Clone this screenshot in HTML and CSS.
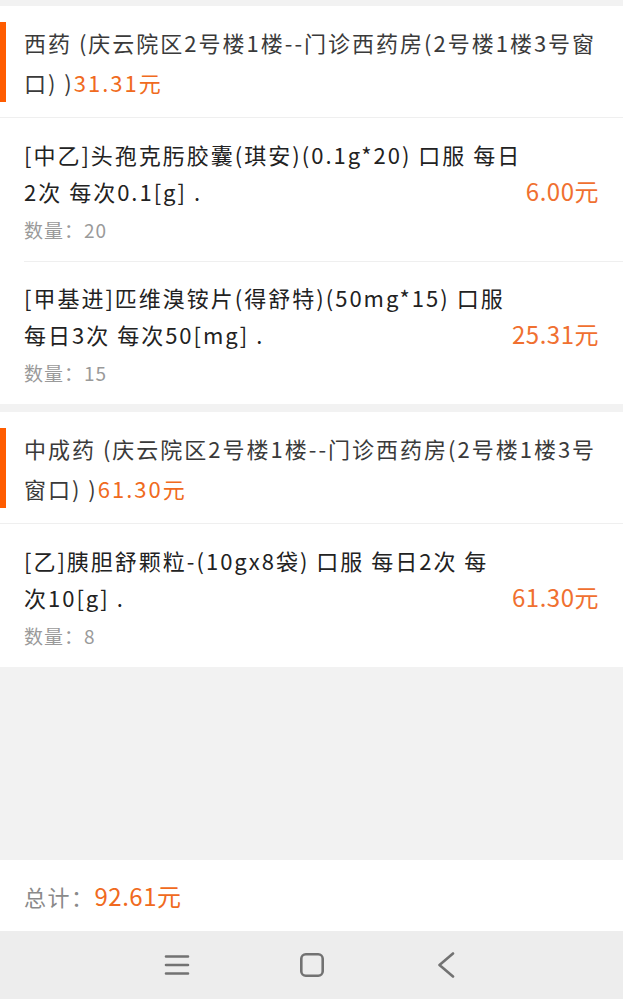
FILE: index.html
```html
<!DOCTYPE html>
<html lang="zh-CN">
<head>
<meta charset="utf-8">
<meta name="viewport" content="width=device-width, initial-scale=1">
<title>处方明细</title>
<link rel="stylesheet" href="styles.css">
</head>
<body>
<div class="page">
  <main class="content">
    <section class="card">
      <div class="group-head">
        <div class="group-title">西药 (庆云院区2号楼1楼--门诊西药房(2号楼1楼3号窗口) )<span class="amount">31.31元</span></div>
      </div>
      <div class="item">
        <div class="item-info">
          <div class="item-name">[中乙]头孢克肟胶囊(琪安)(0.1g*20) 口服 每日2次 每次0.1[g] .</div>
          <div class="item-qty">数量：20</div>
        </div>
        <div class="item-price">6.00元</div>
      </div>
      <div class="item">
        <div class="item-info">
          <div class="item-name">[甲基进]匹维溴铵片(得舒特)(50mg*15) 口服 每日3次 每次50[mg] .</div>
          <div class="item-qty">数量：15</div>
        </div>
        <div class="item-price">25.31元</div>
      </div>
    </section>
    <section class="card">
      <div class="group-head">
        <div class="group-title">中成药 (庆云院区2号楼1楼--门诊西药房(2号楼1楼3号窗口) )<span class="amount">61.30元</span></div>
      </div>
      <div class="item">
        <div class="item-info">
          <div class="item-name">[乙]胰胆舒颗粒-(10gx8袋) 口服 每日2次 每次10[g] .</div>
          <div class="item-qty">数量：8</div>
        </div>
        <div class="item-price">61.30元</div>
      </div>
    </section>
  </main>
  <div class="spacer"></div>
  <footer class="total-bar">
    <span class="total-label">总计：</span><span class="total-value">92.61元</span>
  </footer>
  <nav class="sys-nav">
    <svg class="nav-icon" width="26" height="26" viewBox="0 0 26 26" aria-hidden="true">
      <path d="M2 4.5H24M2 13H24M2 21.5H24" stroke="#727272" stroke-width="2.6" stroke-linecap="round" fill="none"/>
    </svg>
    <svg class="nav-icon" width="26" height="26" viewBox="0 0 26 26" aria-hidden="true">
      <rect x="2.3" y="2.3" width="21.4" height="21.4" rx="4.5" stroke="#727272" stroke-width="2.6" fill="none"/>
    </svg>
    <svg class="nav-icon" width="26" height="26" viewBox="0 0 26 26" aria-hidden="true">
      <path d="M19 1.5L5.5 13L19 24.5" stroke="#727272" stroke-width="2.6" stroke-linecap="round" stroke-linejoin="round" fill="none"/>
    </svg>
  </nav>
</div>
</body>
</html>
```
FILE: styles.css
```css
* {
  box-sizing: border-box;
}

html, body {
  margin: 0;
  padding: 0;
}

body {
  background: #f2f2f2;
  font-family: "Noto Sans CJK SC", "Noto Sans", sans-serif;
  color: #333333;
}

.page {
  display: flex;
  flex-direction: column;
  min-height: 100vh;
  height: 999px;
}

.content {
  padding-top: 6px;
  display: flex;
  flex-direction: column;
  gap: 8px;
}

.card {
  background: #ffffff;
}

.group-head {
  padding: 16px 18px 15px 0;
  border-bottom: 1px solid #efefef;
}

.group-title {
  border-left: 6px solid #ff5c00;
  padding-left: 18px;
  font-size: 22px;
  letter-spacing: 2px;
  line-height: 40px;
  color: #3a3a3a;
}

.amount {
  color: #f06a20;
}

.item {
  display: flex;
  align-items: center;
  padding: 18px 24px 16px 24px;
  position: relative;
}

.item + .item::before {
  content: "";
  position: absolute;
  left: 24px;
  right: 0;
  top: 0;
  border-top: 1px solid #efefef;
}

.item-info {
  flex: 1;
  min-width: 0;
}

.item-name {
  font-size: 22px;
  letter-spacing: 2px;
  line-height: 37px;
  color: #222222;
}

.item-qty {
  margin-top: 5px;
  font-size: 19px;
  letter-spacing: 1px;
  line-height: 30px;
  color: #9a9a9a;
}

.item-price {
  flex: none;
  font-size: 24px;
  letter-spacing: 0.5px;
  color: #f07030;
}

.spacer {
  flex: 1;
}

.total-bar {
  background: #ffffff;
  height: 71px;
  display: flex;
  align-items: center;
  padding: 0 24px;
}

.total-label {
  font-size: 22px;
  letter-spacing: 1.5px;
  color: #8a8a8a;
}

.total-value {
  font-size: 24px;
  letter-spacing: 0.5px;
  color: #f06a20;
}

.sys-nav {
  background: #ededed;
  height: 68px;
  display: flex;
  align-items: center;
  justify-content: center;
  gap: 109px;
}

.nav-icon {
  display: block;
}
```
